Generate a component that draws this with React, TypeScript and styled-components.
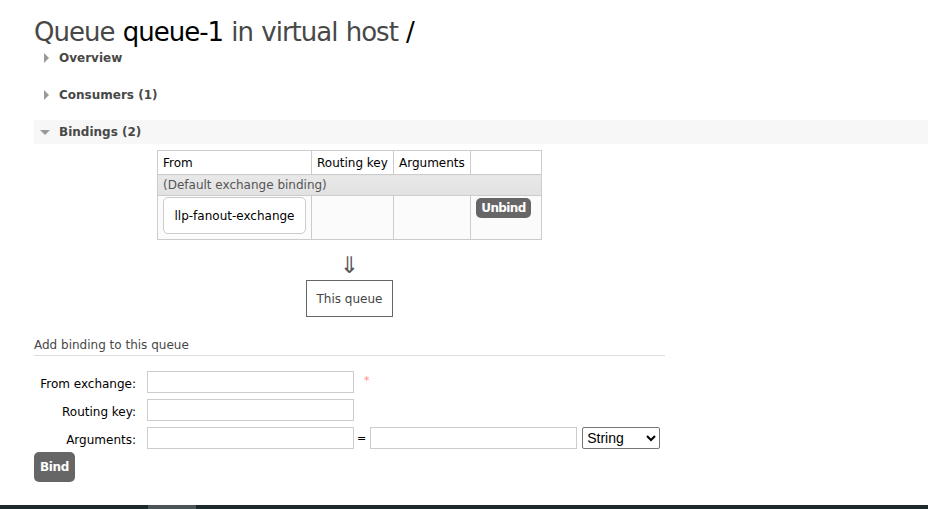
import React from "react";
import styled, { createGlobalStyle } from "styled-components";

const Global = createGlobalStyle`
  html, body { margin: 0; padding: 0; background: #fff; }
  body { font-family: "DejaVu Sans", Verdana, sans-serif; font-size: 12px; color: #484848; }
  #root { min-height: 509px; display: flex; flex-direction: column; }
`;

const Main = styled.main`
  flex: 1;
  padding: 14px 0 0 34px;
  display: flex;
  flex-direction: column;
`;

const Title = styled.h1`
  margin: 0 0 -4px 0;
  font-size: 26px;
  font-weight: normal;
  line-height: 36px;
  color: #484848;
  letter-spacing: -1px;
  word-spacing: 1px;
  b { font-weight: normal; color: #000; }
`;

const Section = styled.div<{ $open?: boolean }>`
  display: flex;
  align-items: center;
  height: 24px;
  margin-bottom: 13px;
  padding-left: ${(p) => (p.$open ? "6px" : "10px")};
  background: ${(p) => (p.$open ? "#f7f7f7" : "transparent")};
  font-weight: bold;
  font-size: 12px;
  color: #484848;
  gap: ${(p) => (p.$open ? "9px" : "10px")};
`;

const Tri = styled.span<{ $open?: boolean }>`
  width: 0;
  height: 0;
  ${(p) =>
    p.$open
      ? `border-left: 5px solid transparent; border-right: 5px solid transparent; border-top: 5px solid #999;`
      : `border-top: 5px solid transparent; border-bottom: 5px solid transparent; border-left: 5px solid #999;`}
`;

const Wrap = styled.div`
  width: 631px;
  display: flex;
  flex-direction: column;
  align-items: center;
  margin-top: -7px;
`;

const Table = styled.table`
  border-collapse: collapse;
  font-size: 12px;
  table-layout: fixed;
`;

const Th = styled.th<{ $w: number }>`
  width: ${(p) => p.$w}px;
  box-sizing: border-box;
  height: 24px;
  border: 1px solid #ccc;
  text-align: left;
  font-weight: normal;
  color: #000;
  padding: 0 5px;
  white-space: nowrap;
  overflow: hidden;
`;

const GroupCell = styled.td`
  border: 1px solid #ccc;
  background: linear-gradient(#e8e8e8, #e2e2e2);
  color: #555;
  height: 20px;
  padding: 0 5px;
`;

const Td = styled.td`
  border: 1px solid #ccc;
  background: #fbfbfb;
  vertical-align: top;
  padding: 1px 5px 5px;
`;

const ExchangeBox = styled.div`
  display: flex;
  align-items: center;
  justify-content: center;
  box-sizing: border-box;
  width: 143px;
  height: 37px;
  background: #fff;
  border: 1px solid #ccc;
  border-radius: 5px;
  color: #000;
`;

const SmallBtn = styled.button`
  margin: 1px 0 0 0;
  border: 0;
  border-radius: 5px;
  background: #666;
  color: #fff;
  font: bold 12px "DejaVu Sans", Verdana, sans-serif;
  letter-spacing: -0.6px;
  width: 55px;
  height: 20px;
  padding: 0;
  display: flex;
  align-items: center;
  justify-content: center;
`;

const Arrow = styled.div`
  margin-top: 14px;
  font-size: 23px;
  line-height: 22px;
  color: #555;
`;

const QueueBox = styled.div`
  margin-top: 4px;
  box-sizing: border-box;
  width: 87px;
  height: 37px;
  border: 1px solid #666;
  display: flex;
  align-items: center;
  justify-content: center;
  color: #444;
`;

const SubHead = styled.h3`
  margin: 21px 0 0 0;
  width: 631px;
  font-size: 12px;
  font-weight: normal;
  color: #484848;
  padding-bottom: 3px;
  border-bottom: 1px solid #ddd;
`;

const Form = styled.div`
  margin-top: 15px;
  display: grid;
  grid-template-columns: 102px auto;
  column-gap: 11px;
  row-gap: 6px;
  align-items: center;
`;

const Label = styled.label`
  text-align: right;
  color: #000;
  padding-top: 4px;
`;

const Line = styled.div`
  display: flex;
  align-items: center;
  height: 22px;
`;

const Input = styled.input`
  box-sizing: border-box;
  width: 207px;
  height: 22px;
  border: 1px solid #ccc;
  margin: 0;
  padding: 2px 4px;
`;

const Mand = styled.span`
  color: #f88;
  margin-left: 10px;
  font-size: 11px;
  position: relative;
  top: -2px;
`;

const Eq = styled.span`
  color: #000;
  margin: 0 4px 0 3px;
  font-size: 11px;
`;

const Select = styled.select`
  margin-left: 5px;
  width: 78px;
  height: 22px;
  font: 14px "Liberation Sans", Arial, sans-serif;
  color: #000;
  border: 1px solid #767676;
  border-radius: 2px;
  background: #fff;
`;

const BindBtn = styled.button`
  margin-top: 3px;
  align-self: flex-start;
  width: 41px;
  height: 30px;
  border: 0;
  border-radius: 5px;
  background: #666;
  color: #fff;
  font: bold 12px "DejaVu Sans", Verdana, sans-serif;
  letter-spacing: -0.3px;
  padding: 0;
`;

const Footer = styled.footer`
  height: 4px;
  background: #1c2a2d;
  display: flex;
  padding-left: 148px;
`;

const FooterTab = styled.div`
  width: 48px;
  background: #4a5458;
`;

export default function App() {
  return (
    <>
      <Global />
      <Main>
        <Title>
          Queue <b>queue-1</b> in virtual host <b>/</b>
        </Title>
        <Section>
          <Tri />
          Overview
        </Section>
        <Section>
          <Tri />
          Consumers (1)
        </Section>
        <Section $open>
          <Tri $open />
          Bindings (2)
        </Section>
        <Wrap>
          <Table>
            <thead>
              <tr>
                <Th $w={154}>From</Th>
                <Th $w={82}>Routing key</Th>
                <Th $w={77}>Arguments</Th>
                <Th $w={71}></Th>
              </tr>
            </thead>
            <tbody>
              <tr>
                <GroupCell colSpan={4}>(Default exchange binding)</GroupCell>
              </tr>
              <tr>
                <Td>
                  <ExchangeBox>llp-fanout-exchange</ExchangeBox>
                </Td>
                <Td></Td>
                <Td></Td>
                <Td>
                  <SmallBtn>Unbind</SmallBtn>
                </Td>
              </tr>
            </tbody>
          </Table>
          <Arrow>⇓</Arrow>
          <QueueBox>This queue</QueueBox>
        </Wrap>
        <SubHead>Add binding to this queue</SubHead>
        <Form>
          <Label>From exchange:</Label>
          <Line>
            <Input />
            <Mand>*</Mand>
          </Line>
          <Label>Routing key:</Label>
          <Line>
            <Input />
          </Line>
          <Label>Arguments:</Label>
          <Line>
            <Input />
            <Eq>=</Eq>
            <Input />
            <Select defaultValue="String">
              <option>String</option>
              <option>Number</option>
              <option>Boolean</option>
            </Select>
          </Line>
        </Form>
        <BindBtn>Bind</BindBtn>
      </Main>
      <Footer>
        <FooterTab />
      </Footer>
    </>
  );
}
